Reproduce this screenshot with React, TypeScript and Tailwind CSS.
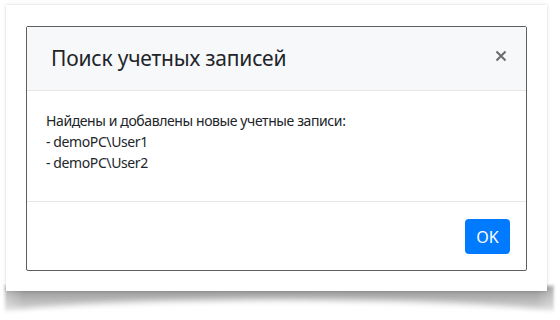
export default function App() {
  return (
    <div
      className="relative h-[320px] w-[560px] overflow-hidden bg-white"
      style={{ fontFamily: '"Noto Sans", "Open Sans", sans-serif' }}
    >
      {/* curled paper shadow under the card */}
      <div className="absolute left-[4px] top-[286px] h-[28px] w-[550px] bg-[linear-gradient(to_bottom,#8c8c8c,#b4b4b4_45%,#d4d4d4_85%,#ffffff)] blur-[1.5px]" />
      <div className="absolute left-[-20px] top-[300px] h-[40px] w-[600px] rounded-[50%] bg-white blur-[3px]" />
      <div className="absolute left-[0px] top-[286px] h-[30px] w-[24px] bg-[linear-gradient(to_right,#ffffff,rgba(255,255,255,0.3)_30%,rgba(255,255,255,0))]" />
      <div className="absolute right-[0px] top-[286px] h-[30px] w-[24px] bg-[linear-gradient(to_left,#ffffff,rgba(255,255,255,0.3)_30%,rgba(255,255,255,0))]" />

      <div className="relative ml-[6px] mt-[5px] h-[286px] w-[541px] bg-white p-[21px_20px] shadow-[0_0_3px_rgba(0,0,0,0.18)]">
        <div className="flex h-[245px] w-[501px] flex-col rounded-[2px] border border-[#5f5f5f] bg-white">
          <div className="flex h-[64px] items-center justify-between border-b border-[#e6e6e6] bg-[#f7f8fa] pl-[24px] pr-[19px]">
            <h5 className="text-[21px] leading-none tracking-[-0.2px] text-[#212529]">Поиск учетных записей</h5>
            <svg width="12" height="12" viewBox="0 0 12 12" className="mt-[-5px]">
              <path d="M1.5 1.5 L10.5 10.5 M10.5 1.5 L1.5 10.5" stroke="#6c6c6c" strokeWidth="2.1" />
            </svg>
          </div>
          <div className="h-[111px] border-b border-[#e6e6e6] px-[19px] pt-[19px] text-[14px] leading-[21px] tracking-[-0.4px] text-[#212529]">
            <p>Найдены и добавлены новые учетные записи:</p>
            <p>- demoPC\User1</p>
            <p>- demoPC\User2</p>
          </div>
          <div className="flex flex-1 items-center justify-end pr-[16px]">
            <button className="mt-[1px] h-[35px] w-[45px] rounded-[4px] bg-[#007bff] text-[16px] text-white">OK</button>
          </div>
        </div>
      </div>
    </div>
  );
}
